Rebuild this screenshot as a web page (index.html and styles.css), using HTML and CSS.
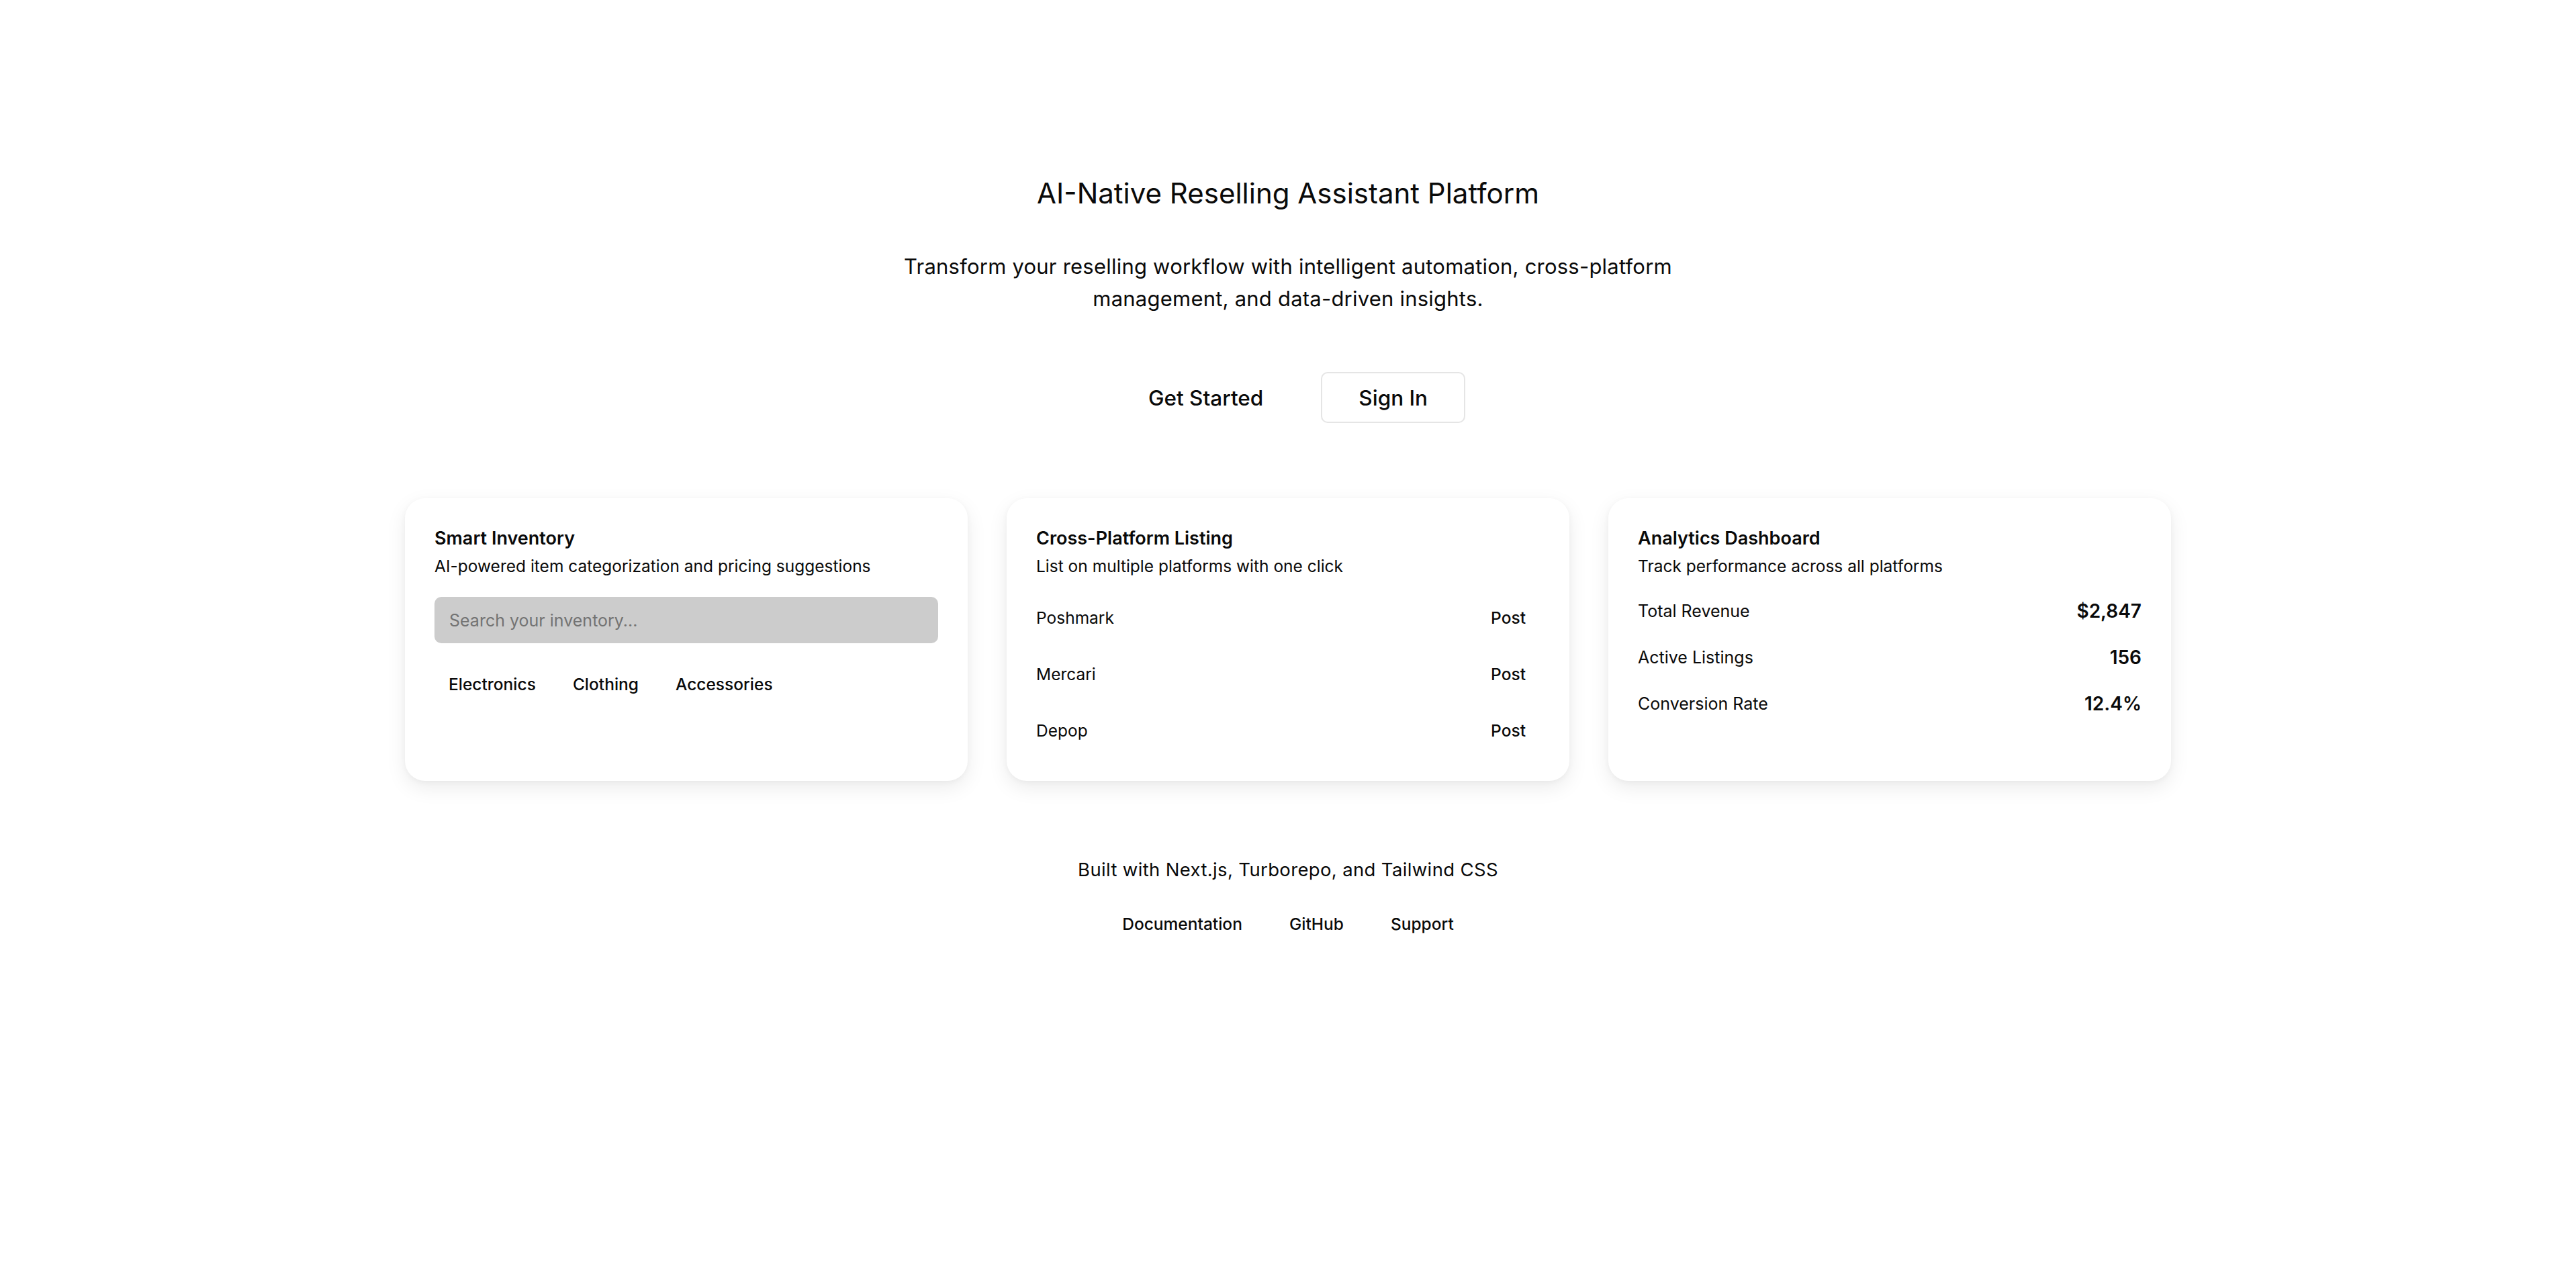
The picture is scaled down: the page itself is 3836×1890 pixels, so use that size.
FILE: index.html
```html
<!DOCTYPE html>
<html lang="en">
<head>
<meta charset="utf-8">
<title>AI-Native Reselling Assistant Platform</title>
<link rel="stylesheet" href="styles.css">
</head>
<body>
<main class="page">
  <section class="hero">
    <h1 class="title">AI-Native Reselling Assistant Platform</h1>
    <p class="subtitle">Transform your reselling workflow with intelligent automation, cross-platform management, and data-driven insights.</p>
    <div class="actions">
      <button class="btn btn-plain">Get Started</button>
      <button class="btn btn-outline">Sign In</button>
    </div>
  </section>

  <section class="cards">
    <div class="card">
      <h2 class="card-title">Smart Inventory</h2>
      <p class="card-desc">AI-powered item categorization and pricing suggestions</p>
      <input class="search" type="text" placeholder="Search your inventory...">
      <div class="tags">
        <button class="chip">Electronics</button>
        <button class="chip">Clothing</button>
        <button class="chip">Accessories</button>
      </div>
    </div>

    <div class="card">
      <h2 class="card-title">Cross-Platform Listing</h2>
      <p class="card-desc">List on multiple platforms with one click</p>
      <div class="list">
        <div class="list-row"><span class="list-name">Poshmark</span><button class="chip">Post</button></div>
        <div class="list-row"><span class="list-name">Mercari</span><button class="chip">Post</button></div>
        <div class="list-row"><span class="list-name">Depop</span><button class="chip">Post</button></div>
      </div>
    </div>

    <div class="card">
      <h2 class="card-title">Analytics Dashboard</h2>
      <p class="card-desc">Track performance across all platforms</p>
      <div class="stats">
        <div class="stat-row"><span class="stat-label">Total Revenue</span><span class="stat-value">$2,847</span></div>
        <div class="stat-row"><span class="stat-label">Active Listings</span><span class="stat-value">156</span></div>
        <div class="stat-row"><span class="stat-label">Conversion Rate</span><span class="stat-value">12.4%</span></div>
      </div>
    </div>
  </section>

  <footer class="footer">
    <p class="footer-text">Built with Next.js, Turborepo, and Tailwind CSS</p>
    <nav class="footer-links">
      <a class="footer-link" href="#">Documentation</a>
      <a class="footer-link" href="#">GitHub</a>
      <a class="footer-link" href="#">Support</a>
    </nav>
  </footer>
</main>
</body>
</html>
```

FILE: styles.css
```css
* { box-sizing: border-box; }

html, body {
  margin: 0;
  padding: 0;
  background: #ffffff;
}

body {
  font-family: Inter, "Noto Sans", "Liberation Sans", sans-serif;
  color: #0a0a0a;
}

.page {
  display: flex;
  flex-direction: column;
  align-items: center;
  padding-top: 262px;
}

.hero {
  display: flex;
  flex-direction: column;
  align-items: center;
  text-align: center;
}

.title {
  margin: 0;
  font-size: 42px;
  line-height: 52px;
  font-weight: 400;
}

.subtitle {
  margin: 59px 0 0;
  max-width: 1220px;
  font-size: 31px;
  letter-spacing: 0.22px;
  line-height: 48px;
  font-weight: 400;
}

.actions {
  display: flex;
  gap: 30px;
  margin-top: 85px;
}

.btn {
  font-family: inherit;
  font-size: 31.5px;
  font-weight: 500;
  color: #0a0a0a;
  height: 76px;
  padding: 0 54px;
  border-radius: 10px;
  background: #ffffff;
  border: 2px solid transparent;
  cursor: pointer;
}

.btn-outline {
  border-color: #e5e5e5;
}

.cards {
  display: grid;
  grid-template-columns: repeat(3, 838px);
  gap: 58px;
  margin-top: 112px;
}

.card {
  background: #ffffff;
  border-radius: 30px;
  padding: 42px 44px 43px;
  box-shadow: 0 10px 30px rgba(0, 0, 0, 0.08), 0 2px 8px rgba(0, 0, 0, 0.04);
  display: flex;
  flex-direction: column;
}

.card-title {
  margin: 0;
  font-size: 27px;
  line-height: 36px;
  font-weight: 600;
}

.card-desc {
  margin: 6px 0 0;
  font-size: 24.5px;
  line-height: 34px;
  font-weight: 400;
}

.search {
  margin-top: 29px;
  height: 69px;
  width: 100%;
  border: none;
  border-radius: 10px;
  background: #cccccc;
  padding: 0 22px;
  font-family: inherit;
  font-size: 25px;
  color: #0a0a0a;
  outline: none;
}

.search::placeholder {
  color: #737373;
}

.tags {
  display: flex;
  gap: 13px;
  margin-top: 29px;
}

.chip {
  font-family: inherit;
  font-size: 24.5px;
  font-weight: 500;
  color: #0a0a0a;
  height: 64px;
  padding: 0 21px;
  border: none;
  background: transparent;
  border-radius: 10px;
  cursor: pointer;
}

.list {
  display: flex;
  flex-direction: column;
  gap: 20px;
  margin-top: 28px;
}

.list-row {
  display: flex;
  align-items: center;
  justify-content: space-between;
  height: 64px;
}

.list-name {
  font-size: 24.5px;
}

.stats {
  display: flex;
  flex-direction: column;
  gap: 25px;
  margin-top: 28px;
}

.stat-row {
  display: flex;
  align-items: center;
  justify-content: space-between;
  height: 44px;
}

.stat-label {
  font-size: 25px;
}

.stat-value {
  font-size: 28px;
  font-weight: 600;
}

.footer {
  display: flex;
  flex-direction: column;
  align-items: center;
  margin-top: 114px;
}

.footer-text {
  margin: 0;
  font-size: 27.5px;
  letter-spacing: 0.35px;
  line-height: 36px;
}

.footer-links {
  display: flex;
  gap: 26px;
  margin-top: 31px;
}

.footer-link {
  display: flex;
  align-items: center;
  height: 64px;
  padding: 0 22px;
  font-size: 24.5px;
  font-weight: 500;
  color: #0a0a0a;
  text-decoration: none;
}
```
